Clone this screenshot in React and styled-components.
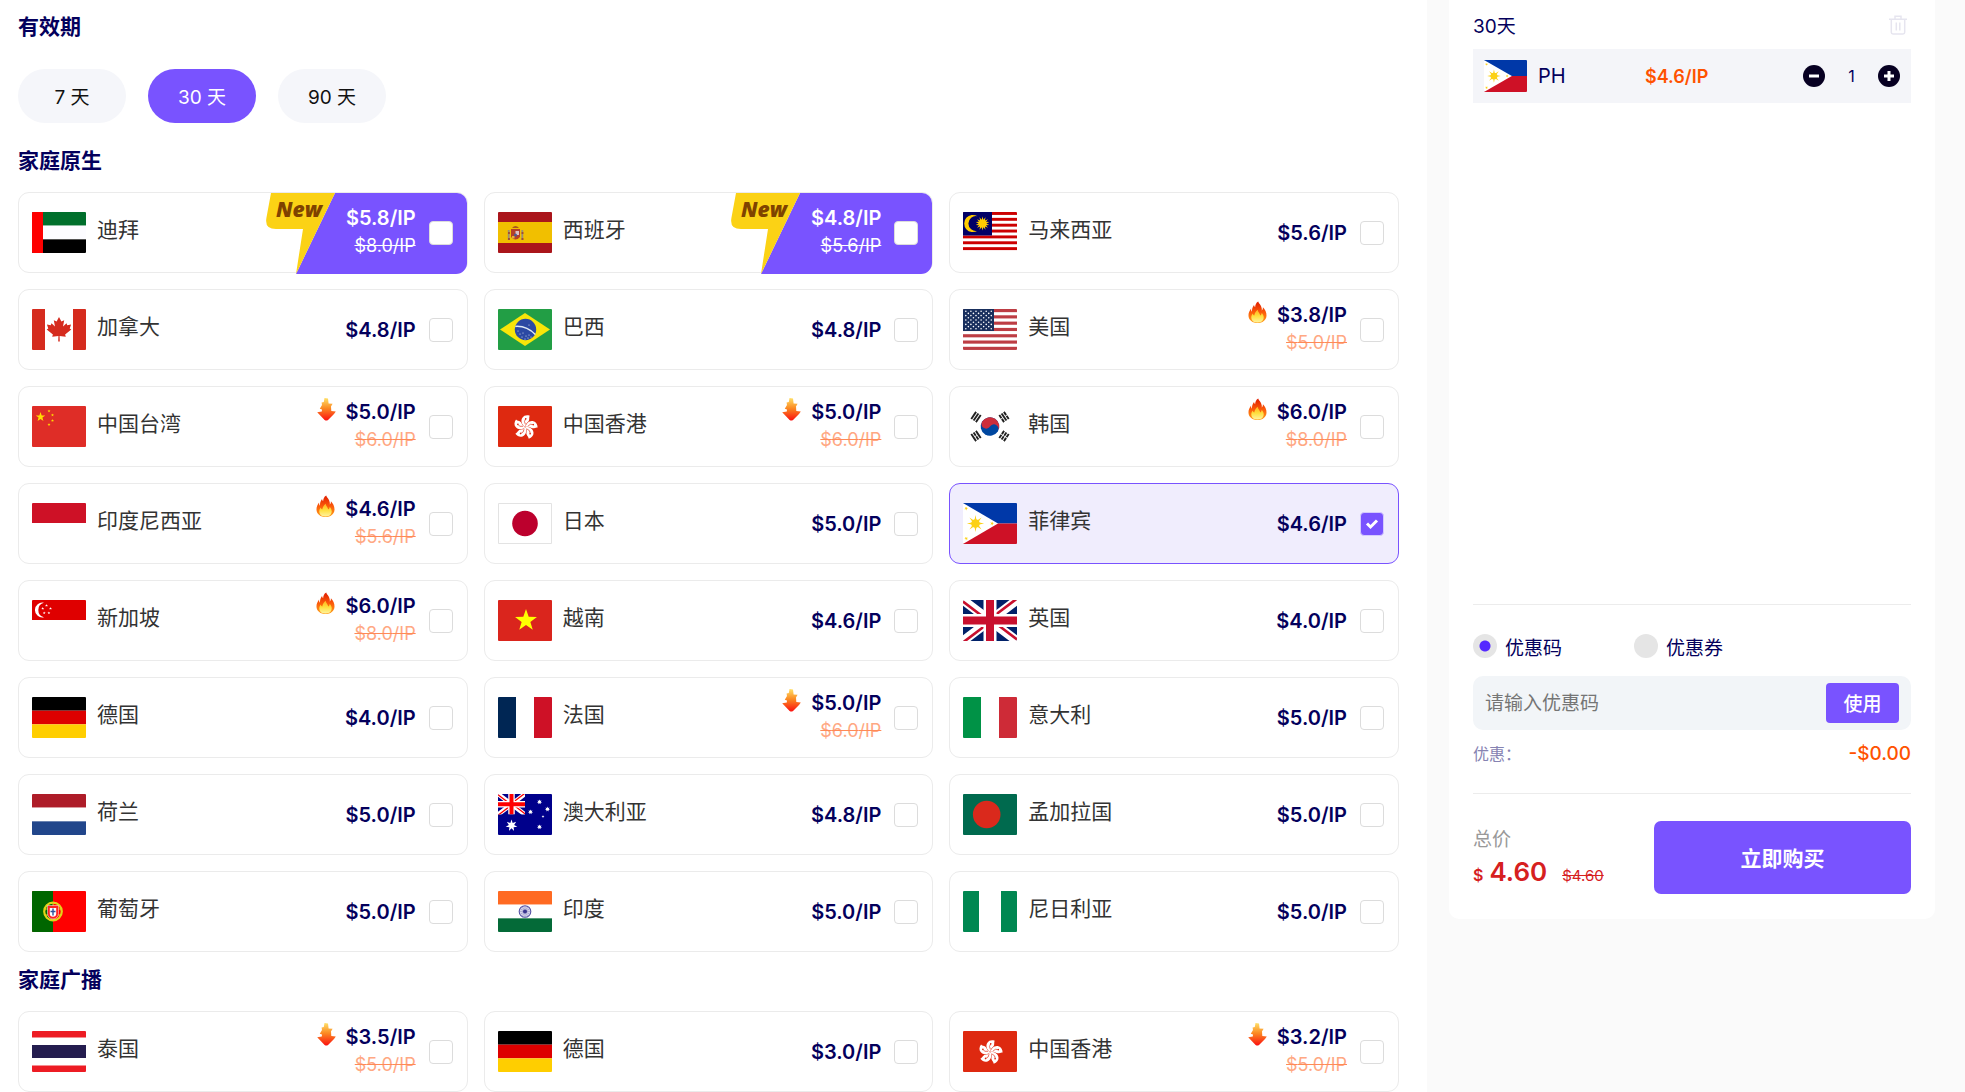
import React, { useState } from 'react';
import styled, { createGlobalStyle, css } from 'styled-components';

const font = `Inter, "Noto Sans CJK SC", "Noto Sans", sans-serif`;
const purple = '#7953ff';
const navy = '#04005c';
const orange = '#ff5200';

const GlobalStyle = createGlobalStyle`
  *, *::before, *::after { box-sizing: border-box; }
  body { margin: 0; background: #fafafa; font-family: ${font}; color: ${navy}; }
  button, input { font-family: inherit; }
`;

/* ---------- layout ---------- */

const Page = styled.div`
  display: flex;
  min-height: 100vh;
  align-items: stretch;
`;

const Main = styled.main`
  flex: 1 1 0;
  min-width: 0;
  padding: 11px 28px 0 18px;
  background: #fff;
`;

const Section = styled.section`
  margin-top: ${(p) => p.$gap || 0}px;
`;

const Heading = styled.h2`
  margin: 0 0 ${(p) => p.$space || 15}px;
  font-size: 21px;
  line-height: 32px;
  font-weight: 700;
  color: ${navy};
`;

const Pills = styled.div`
  display: flex;
  gap: 22px;
`;

const Pill = styled.button`
  width: 108px;
  height: 54px;
  padding: 0 0 2px;
  border: 0;
  border-radius: 27px;
  font-size: 19px;
  color: ${(p) => (p.$active ? '#fff' : '#111')};
  background: ${(p) => (p.$active ? purple : '#f5f6fa')};
  cursor: pointer;
`;

const Grid = styled.div`
  display: grid;
  grid-template-columns: repeat(3, minmax(0, 1fr));
  gap: 16px;
`;

/* ---------- country card ---------- */

const Card = styled.label`
  position: relative;
  display: flex;
  align-items: center;
  height: 81px;
  padding: 0 14px 0 13px;
  border: 1px solid #ebebeb;
  border-radius: 11px;
  background: #fff;
  cursor: pointer;
  ${(p) =>
    p.$selected &&
    css`
      border-color: ${purple};
      background: #f0edfd;
    `}
`;

const FlagBox = styled.svg`
  flex: none;
  display: block;
  width: ${(p) => p.$w || 54}px;
  height: ${(p) => p.$h || 41}px;
  border-radius: 1px;
`;

const Name = styled.span`
  flex: 1;
  margin-left: 11px;
  padding-bottom: 5px;
  font-size: 21px;
  line-height: 28px;
  color: #333;
`;

const Prices = styled.span`
  position: relative;
  display: flex;
  flex-direction: column;
  align-items: flex-end;
  padding-bottom: ${(p) => (p.$double ? 2 : 0)}px;
`;

const PriceLine = styled.span`
  display: flex;
  align-items: center;
  gap: 10px;
`;

const Price = styled.span`
  font-size: 20px;
  line-height: 28px;
  font-weight: 600;
  color: ${(p) => (p.$light ? '#fff' : navy)};
`;

const OldPrice = styled.s`
  font-size: 18px;
  line-height: 28px;
  color: ${(p) => (p.$light ? '#fff' : '#ffa883')};
  text-decoration-color: ${(p) => (p.$light ? '#fff' : '#ff8a57')};
`;

const HotIcon = styled.svg`
  flex: none;
  width: 19px;
  height: 23px;
  margin-bottom: 4px;
`;

const Tick = styled.span`
  position: relative;
  display: grid;
  place-items: center;
  margin-left: 13px;
`;

const TickInput = styled.input`
  appearance: none;
  grid-area: 1 / 1;
  width: 24px;
  height: 24px;
  margin: 0;
  border: 1px solid #dcdcdc;
  border-radius: 4px;
  background: #fff;
  &:checked {
    border-color: #d5cbfd;
    background: ${purple};
  }
`;

const TickMark = styled.svg`
  grid-area: 1 / 1;
  width: 14px;
  height: 14px;
  z-index: 1;
  pointer-events: none;
`;

const Badge = styled.svg`
  position: absolute;
  top: 0;
  right: 0;
  width: 201px;
  height: 81px;
  border-radius: 0 10px 11px 0;
`;

/* ---------- cart ---------- */

const Side = styled.aside`
  flex: none;
  width: 538px;
  padding: 0 30px 0 22px;
`;

const Panel = styled.div`
  padding: 0 24px 25px;
  border-radius: 0 0 10px 10px;
  background: #fff;
`;

const CartList = styled.div`
  min-height: 604px;
`;

const CartHead = styled.div`
  display: flex;
  align-items: center;
  justify-content: space-between;
  height: 49px;
  font-size: 19px;
`;

const IconButton = styled.button`
  display: flex;
  padding: 0;
  border: 0;
  background: none;
  cursor: pointer;
`;

const TrashButton = styled(IconButton)`
  margin-right: 4px;
`;

const CartItem = styled.div`
  display: grid;
  grid-template-columns: 43px 96px 1fr auto;
  gap: 11px;
  align-items: center;
  height: 54px;
  padding: 0 11px;
  background: #f4f5f9;
`;

const Code = styled.span`
  font-size: 20px;
  line-height: 28px;
`;

const CartPrice = styled.span`
  font-size: 18px;
  font-weight: 600;
  color: ${orange};
`;

const Stepper = styled.div`
  display: flex;
  align-items: center;
`;

const Count = styled.span`
  width: 53px;
  text-align: center;
  font-size: 16px;
`;

const CouponArea = styled.div`
  padding: 29px 0 28px;
  border-top: 1px solid #ececec;
`;

const Radios = styled.div`
  display: grid;
  grid-template-columns: 161px 1fr;
  margin-bottom: 18px;
`;

const RadioLabel = styled.label`
  display: flex;
  align-items: center;
  gap: 8px;
  height: 24px;
  font-size: 19px;
  cursor: pointer;
`;

const Radio = styled.input`
  appearance: none;
  width: 24px;
  height: 24px;
  margin: 0;
  border-radius: 50%;
  background: #e5e5e5;
  &:checked {
    background: radial-gradient(circle, #5429ff 0 5px, #e5e5e5 6px);
  }
`;

const CouponBox = styled.div`
  display: flex;
  align-items: center;
  height: 54px;
  padding: 0 12px;
  border-radius: 10px;
  background: #f2f5f8;
`;

const CouponInput = styled.input`
  flex: 1;
  min-width: 0;
  padding: 0;
  border: 0;
  outline: 0;
  background: none;
  font-size: 19px;
  color: ${navy};
  &::placeholder {
    color: #757575;
  }
`;

const UseButton = styled.button`
  width: 73px;
  height: 40px;
  padding: 0 0 2px;
  border: 0;
  border-radius: 4px;
  background: ${purple};
  color: #fff;
  font-size: 19px;
  font-weight: 500;
  cursor: pointer;
`;

const Discount = styled.div`
  display: flex;
  align-items: center;
  justify-content: space-between;
  height: 24px;
  margin-top: 11px;
  font-size: 16px;
  color: #8683b2;
`;

const Minus = styled.span`
  font-size: 19px;
  font-weight: 500;
  color: ${orange};
`;

const Checkout = styled.div`
  display: flex;
  align-items: center;
  justify-content: space-between;
  padding-top: 27px;
  border-top: 1px solid #ececec;
`;

const Total = styled.div`
  color: #d6201f;
`;

const TotalLabel = styled.div`
  font-size: 19px;
  line-height: 32px;
  color: #999;
`;

const TotalLine = styled.div`
  display: flex;
  align-items: baseline;
  line-height: 32px;
`;

const Currency = styled.span`
  font-size: 16px;
  font-weight: 600;
  margin-right: 6px;
`;

const Amount = styled.span`
  font-size: 26px;
  font-weight: 600;
`;

const OldAmount = styled.s`
  margin-left: 15px;
  font-size: 15px;
`;

const BuyButton = styled.button`
  width: 257px;
  height: 73px;
  padding: 0 0 2px;
  border: 0;
  border-radius: 7px;
  background: ${purple};
  color: #fff;
  font-size: 21px;
  font-weight: 700;
  cursor: pointer;
`;

/* ---------- flags (54 x 41 canvas) ---------- */

const starPoints = (cx, cy, r, n = 5, inner = 0.4, rot = -90) =>
  Array.from({ length: n * 2 }, (_, i) => {
    const a = ((rot + (i * 180) / n) * Math.PI) / 180;
    const q = i % 2 ? r * inner : r;
    return `${(cx + q * Math.cos(a)).toFixed(2)},${(cy + q * Math.sin(a)).toFixed(2)}`;
  }).join(' ');

const Star = ({ x, y, r, n, inner, rot, fill }) => (
  <polygon points={starPoints(x, y, r, n, inner, rot)} fill={fill} />
);

const Rows = ({ colors }) =>
  colors.map((c, i) => (
    <rect key={i} x="0" y={(41 / colors.length) * i} width="54" height={41 / colors.length} fill={c} />
  ));

const Cols = ({ parts }) => parts.map(([x, w, c]) => <rect key={x} x={x} width={w} height="41" fill={c} />);

const Union = ({ blue, red }) => (
  <>
    <rect width="54" height="41" fill={blue} />
    <path d="M0 0L54 41M54 0L0 41" stroke="#fff" strokeWidth="9" />
    <path
      d="M0 1.5L27 22M54 39.5L27 19M54 -1.5L27 19M0 42.500L27 22"
      stroke={red}
      strokeWidth="2.600"
    />
    <path d="M27 0V41M0 20.500H54" stroke="#fff" strokeWidth="13" />
    <path d="M27 0V41M0 20.500H54" stroke={red} strokeWidth="8" />
  </>
);

const Trigram = ({ x, y, rot, broken }) => (
  <g transform={`translate(${x} ${y}) rotate(${rot})`} stroke="#222" strokeWidth="1.900">
    {[-2.8, 0, 2.8].map((d, i) => (
      <path key={d} d={`M-4.300 ${d}H4.300`} strokeDasharray={broken[i] ? '3.900 0.800' : undefined} />
    ))}
  </g>
);

const flags = {
  AE: (
    <>
      <Rows colors={['#006f2c', '#fcfcff', '#000']} />
      <rect width="11" height="41" fill="#fe0000" />
    </>
  ),
  ES: (
    <>
      <rect width="54" height="41" fill="#aa151b" />
      <rect y="10" width="54" height="21" fill="#f1bf00" />
      <path d="M13 17h9v8q-4.500 5-9 0z" fill="#b3402a" />
      <path d="M10.700 18v10M24.300 18v10" stroke="#9a8f78" strokeWidth="1.800" />
      <path d="M10 21h2M10 27h2M23.500 21h2M23.500 27h2" stroke="#a13a2b" strokeWidth="1.400" />
      <path d="M14 16q3.500-3.800 7 0z" fill="#a9581d" />
      <rect x="17.500" y="19" width="3.500" height="4" fill="#d9c0c5" />
      <circle cx="17.500" cy="23" r="1.500" fill="#4a5b93" />
      <path d="M14 24h2.500v2.500h-2.500z" fill="#e3b23c" />
    </>
  ),
  MY: (
    <>
      <rect width="54" height="41" fill="#fff" />
      {Array.from({ length: 7 }, (_, i) => (
        <rect key={i} y={i * 5.86} width="54" height="2.930" fill="#cc0001" />
      ))}
      <rect width="29" height="23.500" fill="#010066" />
      <path d="M14.500 4.300A8.600 8.600 0 1 0 14.500 18.700A7.400 7.400 0 1 1 14.500 4.300z" fill="#fc0" />
      <Star x={19.5} y={11.5} r={7} n={14} inner={0.55} fill="#fc0" />
    </>
  ),
  CA: (
    <>
      <Cols parts={[[0, 13, '#d52b1e'], [13, 28, '#fff'], [41, 13, '#d52b1e']]} />
      <path
        d="M27 8l2.400 4.600 2.800-1.400-1.200 6.400 3.500-3.300.8 1.900 3.800-.6-1.400 4 1.600.9-6.200 4.900.7 2.400-6.200-.8.200 5.600h-1.600l.2-5.600-6.200.8.7-2.400-6.200-4.900 1.600-.9-1.400-4 3.800.6.8-1.900 3.500 3.300-1.200-6.400 2.800 1.400z"
        fill="#d52b1e"
      />
    </>
  ),
  BR: (
    <>
      <rect width="54" height="41" fill="#229e45" />
      <path d="M2 20.500L27 4l25 16.500L27 37z" fill="#f8e509" />
      <circle cx="27.500" cy="20.500" r="10.700" fill="#2b49a3" />
      <path d="M17.300 17.400q11.500-.8 20 8.200" fill="none" stroke="#dfeaf5" strokeWidth="1.500" />
      {[[20, 22], [22, 25], [25, 24], [24, 28], [28, 27], [31, 26], [30, 29], [33, 28], [27, 30], [31, 16]].map(([x, y]) => (
        <circle key={`${x}-${y}`} cx={x} cy={y} r="0.500" fill="#fff" />
      ))}
    </>
  ),
  US: (
    <>
      <rect width="54" height="41" fill="#fff" />
      {Array.from({ length: 7 }, (_, i) => (
        <rect key={i} y={i * 6.3} width="54" height="3.150" fill="#bd3d44" />
      ))}
      <rect width="31" height="22" fill="#192f5d" />
      {Array.from({ length: 9 }, (_, r) =>
        Array.from({ length: r % 2 ? 5 : 6 }, (_, c) => (
          <circle key={`${r}-${c}`} cx={2.8 + (r % 2 ? 2.55 : 0) + c * 5.1} cy={2.2 + r * 2.2} r="0.800" fill="#fff" />
        ))
      )}
    </>
  ),
  CN: (
    <>
      <rect width="54" height="41" fill="#df2d27" />
      <Star x={8.5} y={11} r={5} fill="#ffde00" />
      {[[17, 5], [20.5, 9], [20.5, 14.5], [17, 18.5]].map(([x, y]) => (
        <Star key={y} x={x} y={y} r={1.6} fill="#ffde00" />
      ))}
    </>
  ),
  HK: (
    <>
      <rect width="54" height="41" fill="#de2910" />
      {[0, 72, 144, 216, 288].map((a) => (
        <g key={a} transform={`translate(27.500 21) rotate(${a + 12})`}>
          <path d="M0 0C-3.500-1-6.500-4.500-5-8.500C-4-11-1.500-12.300 1.800-12C1.200-10.500 2.300-9 2-7C1.700-5-.8-4 0 0z" fill="#fff" />
          <path d="M-.6-2.500Q-3.200-5-1.600-8" fill="none" stroke="#de2910" strokeWidth="0.600" />
          <circle cx="-1.500" cy="-8" r="0.800" fill="#de2910" />
        </g>
      ))}
    </>
  ),
  KR: (
    <>
      <rect width="54" height="41" fill="#fff" />
      <g transform="translate(27 20.500) rotate(33)">
        <circle r="9.300" fill="#0047a0" />
        <path d="M-9.300 0A9.300 9.300 0 0 1 9.300 0A4.650 4.650 0 0 0 0 0A4.650 4.650 0 0 1 -9.300 0z" fill="#cd2e3a" />
      </g>
      <Trigram x={13} y={11} rot={-56} broken={[0, 0, 0]} />
      <Trigram x={41} y={30} rot={-56} broken={[1, 1, 1]} />
      <Trigram x={41} y={11} rot={56} broken={[1, 0, 1]} />
      <Trigram x={13} y={30} rot={56} broken={[0, 1, 0]} />
    </>
  ),
  ID: (
    <>
      <rect width="54" height="41" fill="#fff" />
      <rect width="54" height="20" fill="#ce1126" />
    </>
  ),
  JP: (
    <>
      <rect x="0.500" y="0.500" width="53" height="40" fill="#fff" stroke="#e3e3e3" />
      <circle cx="27" cy="20.500" r="12.800" fill="#bc002d" />
    </>
  ),
  PH: (
    <>
      <rect width="54" height="20.500" fill="#0038a8" />
      <rect y="20.500" width="54" height="20.500" fill="#ce1126" />
      <path d="M0 0L35 20.500L0 41z" fill="#fff" />
      <circle cx="12.500" cy="20.500" r="4.300" fill="#fcd116" />
      <Star x={12.5} y={20.5} r={8.6} n={8} inner={0.35} rot={0} fill="#fcd116" />
      <Star x={3.2} y={5.5} r={2} rot={-60} fill="#fcd116" />
      <Star x={3.2} y={35.5} r={2} rot={-120} fill="#fcd116" />
      <Star x={29} y={20.5} r={2} rot={0} fill="#fcd116" />
    </>
  ),
  SG: (
    <>
      <rect width="54" height="41" fill="#fff" />
      <rect width="54" height="20" fill="#df0000" />
      <path d="M12 2.800A7.400 7.400 0 1 0 12 17.200A7.400 7.400 0 0 1 12 2.800z" fill="#fff" />
      {[[14.5, 5.5], [18.5, 8.5], [10.7, 8.5], [12.2, 13], [16.9, 13]].map(([x, y]) => (
        <Star key={`${x}`} x={x} y={y} r={1.5} fill="#fff" />
      ))}
    </>
  ),
  VN: (
    <>
      <rect width="54" height="41" fill="#da251d" />
      <Star x={28} y={20.5} r={11.5} fill="#ff0" />
    </>
  ),
  GB: <Union blue="#012169" red="#c8102e" />,
  DE: <Rows colors={['#000', '#d00', '#ffce00']} />,
  FR: <Cols parts={[[0, 18, '#002654'], [18, 18, '#fff'], [36, 18, '#ce1126']]} />,
  IT: <Cols parts={[[0, 18, '#009246'], [18, 18, '#fff'], [36, 18, '#ce2b37']]} />,
  NL: <Rows colors={['#ae1c28', '#fff', '#21468b']} />,
  AU: (
    <>
      <rect width="54" height="41" fill="#00008b" />
      <svg width="27" height="20.500" viewBox="0 0 54 41" preserveAspectRatio="none">
        <Union blue="#00008b" red="#f00" />
      </svg>
      <Star x={13.5} y={31.5} r={6} n={7} inner={0.45} fill="#fff" />
      {[[41.5, 8], [49.5, 15.2], [32.5, 18], [41.5, 33]].map(([x, y]) => (
        <Star key={y} x={x} y={y} r={2.6} n={7} inner={0.5} fill="#fff" />
      ))}
      <Star x={45} y={22.5} r={1.5} fill="#fff" />
    </>
  ),
  BD: (
    <>
      <rect width="54" height="41" fill="#006a4e" />
      <circle cx="23.700" cy="20.500" r="13.800" fill="#da291c" />
    </>
  ),
  PT: (
    <>
      <rect width="54" height="41" fill="#f00" />
      <rect width="21" height="41" fill="#060" />
      <circle cx="21" cy="20.500" r="8.800" fill="none" stroke="#e3d318" strokeWidth="2.200" />
      <path d="M13 18h16M13 24h16M21 12v18" stroke="#e3d318" strokeWidth="0.900" />
      <path d="M15.500 14.500h11v8a5.500 5.500 0 0 1-11 0z" fill="#f22" stroke="#fff" strokeWidth="0.500" />
      <path d="M17.800 17h6.400v5.500a3.200 3.200 0 0 1-6.400 0z" fill="#fff" />
      <path d="M21 17.500v7M18.500 20.500h5" stroke="#2c4f9c" strokeWidth="1.400" />
    </>
  ),
  IN: (
    <>
      <Rows colors={['#ff6a22', '#fff', '#046a38']} />
      <circle cx="27" cy="20.500" r="5.800" fill="#d5d3ea" stroke="#5552a5" strokeWidth="1.100" />
      {[0, 30, 60, 90, 120, 150].map((a) => (
        <path key={a} d="M22 20.500H32" stroke="#8a88c2" strokeWidth="0.500" transform={`rotate(${a} 27 20.500)`} />
      ))}
      <circle cx="27" cy="20.500" r="2" fill="#3a368f" />
    </>
  ),
  NG: <Cols parts={[[0, 16, '#008751'], [16, 22, '#fff'], [38, 16, '#008751']]} />,
  TH: (
    <>
      <rect width="54" height="41" fill="#fff" />
      <rect width="54" height="6.500" fill="#ed1c24" />
      <rect y="14" width="54" height="13" fill="#241d4f" />
      <rect y="34.500" width="54" height="6.500" fill="#ed1c24" />
    </>
  ),
};

const Flag = ({ code, w, h }) => (
  <FlagBox $w={w} $h={h} viewBox="0 0 54 41" preserveAspectRatio="none" aria-hidden="true">
    {flags[code]}
  </FlagBox>
);

/* ---------- icons ---------- */

const Hidden = styled.svg`
  position: absolute;
`;

const IconDefs = () => (
  <Hidden width="0" height="0" aria-hidden="true">
    <defs>
      <linearGradient id="flameOuter" x1="0" y1="0" x2="0" y2="1">
        <stop offset="0" stopColor="#e01c00" />
        <stop offset="0.500" stopColor="#fb5b0a" />
        <stop offset="1" stopColor="#ffa21a" />
      </linearGradient>
      <linearGradient id="flameInner" x1="0" y1="0" x2="0" y2="1">
        <stop offset="0" stopColor="#ffb020" />
        <stop offset="0.500" stopColor="#ffdf3d" />
        <stop offset="1" stopColor="#fff3a0" />
      </linearGradient>
      <linearGradient id="dropFill" x1="0" y1="0" x2="0" y2="1">
        <stop offset="0" stopColor="#ffe169" />
        <stop offset="0.450" stopColor="#fb8a23" />
        <stop offset="1" stopColor="#fb1010" />
      </linearGradient>
    </defs>
  </Hidden>
);

const Flame = () => (
  <HotIcon viewBox="0 0 19 23" aria-hidden="true">
    <path
      d="M10.200 .6C10.600 2.600 13.200 4 13.700 7.200C13.900 8.200 13.900 9 13.700 9.600C14.600 9 15 8 14.900 6.300C17 8.500 18.700 11.500 18.500 14.700C18.200 19.300 14.600 22 9.600 22C4.500 22 .8 19.300 .5 15C.3 12 1.500 9.700 3.100 7.500C3 9 3.200 10 3.900 10.700C4 8.500 4.300 6.200 6 4C6.200 5 6.500 5.800 7.100 6.200C7.300 4 8 1.900 10.200 .6z"
      fill="url(#flameOuter)"
    />
    <path
      d="M9.700 8.700C9.800 11 11.800 12 12.300 14.500C13.200 14 13.700 13 13.700 11.800C15 13.300 15.900 15 15.700 17C15.300 20 12.900 21.500 9.500 21.500C5.900 21.500 3.600 20 3.300 17C3.100 15.300 3.900 13.700 4.700 12.500C5 13.700 5.500 14.200 6.300 14.500C6.500 12.200 7.700 10.500 9.700 8.700z"
      fill="url(#flameInner)"
    />
  </HotIcon>
);

const Drop = () => (
  <HotIcon viewBox="0 0 19 23" aria-hidden="true">
    <path
      d="M7.500 0L11 .5L11.600 5.500L15.600 5.800L14 8.500L14.300 13L18.800 13.600L17 16L11 22Q9.300 23.200 7.600 22L.2 14.200L4.800 13.400L5 11.500L2.800 10.800L5 7L4.600 4.500L6.800 4z"
      fill="url(#dropFill)"
    />
  </HotIcon>
);

const NewBadge = () => (
  <Badge viewBox="0 0 201 81" preserveAspectRatio="none">
    <path d="M69 0H201V81H30z" fill={purple} />
    <path d="M5 0H69L30 81L37 36H10Q-1.500 36 .4 25z" fill="#fbd215" />
    <text x="10" y="24" fontFamily='"Open Sans", "Noto Sans", sans-serif' fontSize="21" fontWeight="800" fontStyle="italic" fill="#7f4300">
      New
    </text>
  </Badge>
);

const Trash = () => (
  <svg width="18" height="20" viewBox="0 0 18 20" fill="none" stroke="#e6e5ef" strokeWidth="1.500" aria-hidden="true">
    <path d="M0 4.300H18M6 4V1.200H12V4M2.300 4.500V17.300Q2.300 19 4 19H14Q15.700 19 15.700 17.300V4.500M7.300 7.500V15.500M10.800 7.500V15.500" />
  </svg>
);

const Circle = ({ plus }) => (
  <svg width="22" height="22" viewBox="0 0 22 22" aria-hidden="true">
    <circle cx="11" cy="11" r="11" fill="#070022" />
    <path d={plus ? 'M6 11H16M11 6V16' : 'M6 11H16'} stroke="#fff" strokeWidth="3" />
  </svg>
);

/* ---------- data ---------- */

const native = [
  ['AE', '迪拜', '5.8', '8.0', 'new'],
  ['ES', '西班牙', '4.8', '5.6', 'new'],
  ['MY', '马来西亚', '5.6'],
  ['CA', '加拿大', '4.8'],
  ['BR', '巴西', '4.8'],
  ['US', '美国', '3.8', '5.0', 'hot'],
  ['CN', '中国台湾', '5.0', '6.0', 'drop'],
  ['HK', '中国香港', '5.0', '6.0', 'drop'],
  ['KR', '韩国', '6.0', '8.0', 'hot'],
  ['ID', '印度尼西亚', '4.6', '5.6', 'hot'],
  ['JP', '日本', '5.0'],
  ['PH', '菲律宾', '4.6'],
  ['SG', '新加坡', '6.0', '8.0', 'hot'],
  ['VN', '越南', '4.6'],
  ['GB', '英国', '4.0'],
  ['DE', '德国', '4.0'],
  ['FR', '法国', '5.0', '6.0', 'drop'],
  ['IT', '意大利', '5.0'],
  ['NL', '荷兰', '5.0'],
  ['AU', '澳大利亚', '4.8'],
  ['BD', '孟加拉国', '5.0'],
  ['PT', '葡萄牙', '5.0'],
  ['IN', '印度', '5.0'],
  ['NG', '尼日利亚', '5.0'],
];

const broadcast = [
  ['TH', '泰国', '3.5', '5.0', 'drop'],
  ['DE', '德国', '3.0'],
  ['HK', '中国香港', '3.2', '5.0', 'drop'],
];

const Country = ({ item, checked, onToggle }) => {
  const [code, name, price, old, tag] = item;
  const isNew = tag === 'new';
  return (
    <Card $selected={checked}>
      {isNew && <NewBadge />}
      <Flag code={code} />
      <Name>{name}</Name>
      <Prices $double={!!old}>
        <PriceLine>
          {tag === 'hot' && <Flame />}
          {tag === 'drop' && <Drop />}
          <Price $light={isNew}>${price}/IP</Price>
        </PriceLine>
        {old && <OldPrice $light={isNew}>${old}/IP</OldPrice>}
      </Prices>
      <Tick>
        <TickInput type="checkbox" checked={checked} onChange={onToggle} />
        {checked && (
          <TickMark viewBox="0 0 14 14">
            <path d="M2 6.500L5.500 10L12 3.500" fill="none" stroke="#fff" strokeWidth="3" />
          </TickMark>
        )}
      </Tick>
    </Card>
  );
};

export default function App() {
  const [days, setDays] = useState(30);
  const [picked, setPicked] = useState({ 'native-PH': true });
  const [coupon, setCoupon] = useState('code');

  const renderGrid = (group, items) => (
    <Grid>
      {items.map((item) => {
        const key = `${group}-${item[0]}`;
        return (
          <Country
            key={key}
            item={item}
            checked={!!picked[key]}
            onToggle={() => setPicked((p) => ({ ...p, [key]: !p[key] }))}
          />
        );
      })}
    </Grid>
  );

  return (
    <>
      <GlobalStyle />
      <IconDefs />
      <Page>
        <Main>
          <Section>
            <Heading $space={26}>有效期</Heading>
            <Pills>
              {[7, 30, 90].map((d) => (
                <Pill key={d} type="button" $active={days === d} onClick={() => setDays(d)}>
                  {d} 天
                </Pill>
              ))}
            </Pills>
          </Section>
          <Section $gap={22}>
            <Heading>家庭原生</Heading>
            {renderGrid('native', native)}
          </Section>
          <Section $gap={12}>
            <Heading>家庭广播</Heading>
            {renderGrid('broadcast', broadcast)}
          </Section>
        </Main>
        <Side>
          <Panel>
            <CartList>
              <CartHead>
                <span>30天</span>
                <TrashButton type="button" aria-label="删除">
                  <Trash />
                </TrashButton>
              </CartHead>
              <CartItem>
                <Flag code="PH" w={43} h={32} />
                <Code>PH</Code>
                <CartPrice>$4.6/IP</CartPrice>
                <Stepper>
                  <IconButton type="button" aria-label="减少">
                    <Circle />
                  </IconButton>
                  <Count>1</Count>
                  <IconButton type="button" aria-label="增加">
                    <Circle plus />
                  </IconButton>
                </Stepper>
              </CartItem>
            </CartList>
            <CouponArea>
              <Radios>
                <RadioLabel>
                  <Radio type="radio" name="coupon" checked={coupon === 'code'} onChange={() => setCoupon('code')} />
                  优惠码
                </RadioLabel>
                <RadioLabel>
                  <Radio type="radio" name="coupon" checked={coupon === 'ticket'} onChange={() => setCoupon('ticket')} />
                  优惠券
                </RadioLabel>
              </Radios>
              <CouponBox>
                <CouponInput type="text" placeholder="请输入优惠码" aria-label="优惠码" />
                <UseButton type="button">使用</UseButton>
              </CouponBox>
              <Discount>
                <span>优惠：</span>
                <Minus>-$0.00</Minus>
              </Discount>
            </CouponArea>
            <Checkout>
              <Total>
                <TotalLabel>总价</TotalLabel>
                <TotalLine>
                  <Currency>$</Currency>
                  <Amount>4.60</Amount>
                  <OldAmount>$4.60</OldAmount>
                </TotalLine>
              </Total>
              <BuyButton type="button">立即购买</BuyButton>
            </Checkout>
          </Panel>
        </Side>
      </Page>
    </>
  );
}
